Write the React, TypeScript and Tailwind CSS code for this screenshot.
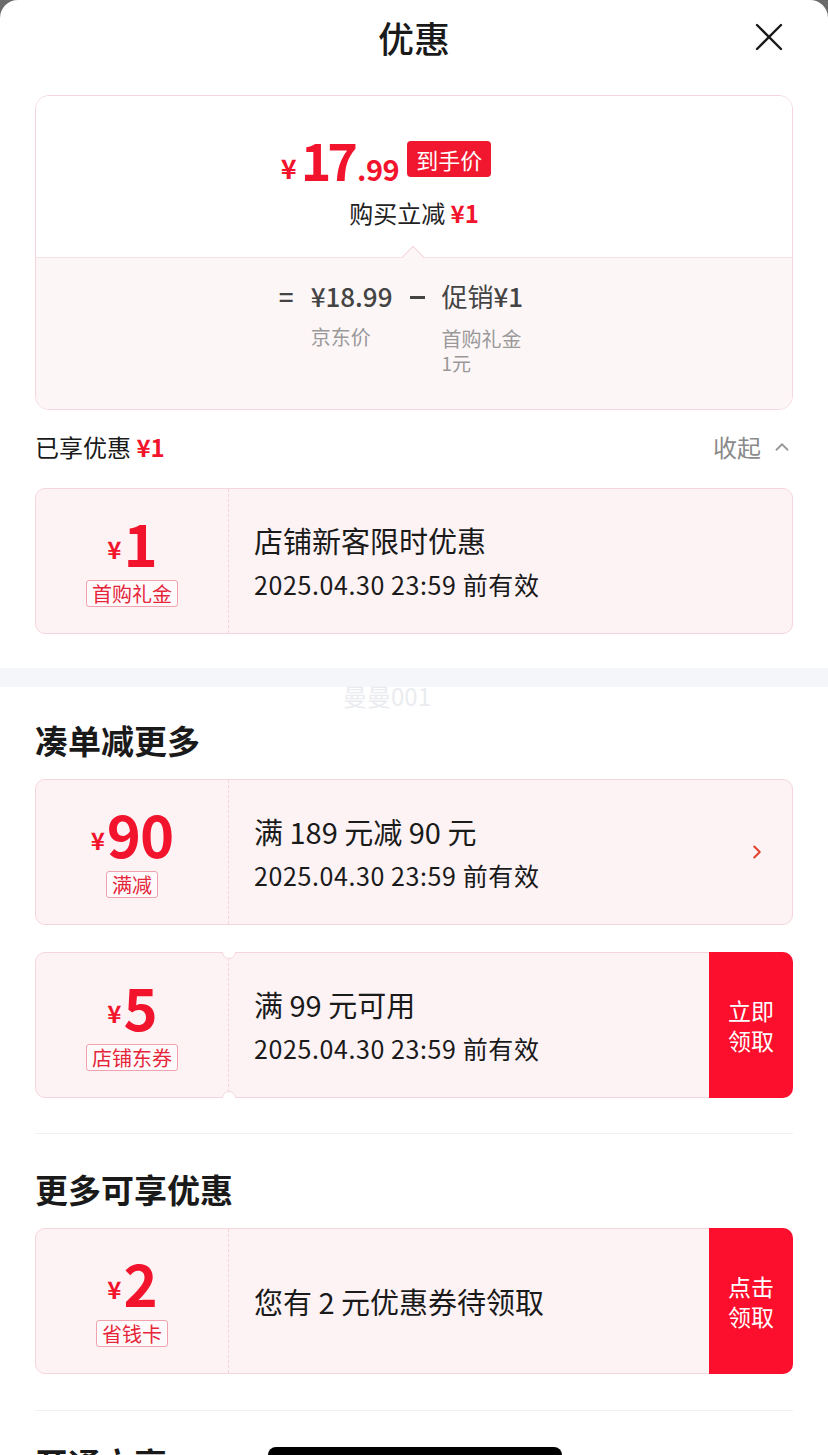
import type { ReactNode } from "react";
import { ChevronRight, ChevronUp } from "lucide-react";

const font = { fontFamily: '"Noto Sans CJK SC", "Noto Sans", sans-serif' };

type CouponProps = {
  amount: string;
  tag: string;
  title: string;
  date?: string;
  action?: "chevron" | ReactNode;
  notched?: boolean;
};

function Coupon({ amount, tag, title, date, action, notched = false }: CouponProps) {
  const isButton = action !== undefined && action !== "chevron";
  return (
    <div className="relative mx-[35px] flex h-[146px] rounded-[10px] border border-[#f6d6dd] bg-[#fdf3f5]">
      {/* 左侧金额 */}
      <div className="flex w-[193px] shrink-0 flex-col items-center justify-center border-r border-dashed border-[#f4d3da]">
        <div className="flex h-[56px] items-end leading-none text-[#f2142c]">
          <span className="mb-[10px] mr-[2px] text-[24px] font-bold">¥</span>
          <span className="text-[58px] font-bold tracking-[-1px]">{amount}</span>
        </div>
        <span className="mt-[9px] rounded-[3px] border border-[#f0a3af] bg-white/60 px-[5px] text-[20px] leading-[25px] text-[#e5253a]">
          {tag}
        </span>
      </div>
      {/* 右侧说明 */}
      <div className="flex min-w-0 flex-1 flex-col justify-center pl-[25px]">
        <p className="text-[29px] leading-[36px] text-[#1a1a1a]">{title}</p>
        {date ? (
          <p className="mt-[10px] text-[25px] leading-[32px] tracking-[0.6px] text-[#1a1a1a]">{date}</p>
        ) : null}
      </div>
      {action === "chevron" ? (
        <div className="flex items-center pr-[24px]">
          <ChevronRight size={22} strokeWidth={2.2} className="text-[#e0402f]" />
        </div>
      ) : null}
      {isButton ? (
        <div className="-my-px -mr-px flex w-[84px] shrink-0 items-center justify-center rounded-r-[10px] bg-[#fb0f2c] text-center text-[23px] leading-[30px] text-white">
          {action}
        </div>
      ) : null}
      {notched ? (
        <>
          <span className="absolute left-[186px] top-[-1px] h-[8px] w-[14px] overflow-hidden">
            <span className="absolute left-0 top-[-7px] h-[14px] w-[14px] rounded-full border border-[#f6d6dd] bg-white" />
          </span>
          <span className="absolute bottom-[-1px] left-[186px] h-[8px] w-[14px] overflow-hidden">
            <span className="absolute bottom-[-7px] left-0 h-[14px] w-[14px] rounded-full border border-[#f6d6dd] bg-white" />
          </span>
        </>
      ) : null}
    </div>
  );
}

function SectionTitle({ children, className = "" }: { children: ReactNode; className?: string }) {
  return (
    <h3 className={`px-[35px] text-[33px] font-bold leading-[44px] text-[#1a1a1a] ${className}`}>
      {children}
    </h3>
  );
}

export default function App() {
  return (
    <div style={font} className="relative h-[1455px] w-[828px] overflow-hidden bg-[#6b6b6b]">
      <div className="h-full rounded-t-[18px] bg-white">
        {/* 标题栏 */}
        <header className="relative flex h-[74px] items-center justify-center">
          <h2 className="text-[36px] font-medium leading-none text-[#1a1a1a]">优惠</h2>
          <svg
            viewBox="0 0 28 28"
            className="absolute right-[45px] top-[23px] h-[28px] w-[28px]"
            fill="none"
            aria-hidden="true"
          >
            <path d="M2 2L26 26M26 2L2 26" stroke="#1a1a1a" strokeWidth="2.4" strokeLinecap="round" />
          </svg>
        </header>

        {/* 到手价卡片 */}
        <div className="mx-[35px] mt-[21px] overflow-hidden rounded-[14px] border border-[#f6d6dd]">
          <div className="h-[161px] bg-white pt-[39px]">
            <div className="flex h-[48px] -translate-x-[28px] items-center justify-center">
              <div className="flex items-end leading-none text-[#f2142c]">
                <span className="mb-[4px] mr-[4px] text-[27px] font-bold">¥</span>
                <span className="text-[52px] font-bold tracking-[-4px]">17</span>
                <span className="mb-[2px] ml-[3px] text-[29px] font-bold tracking-[-0.5px]">.99</span>
              </div>
              <span className="ml-[8px] rounded-[4px] bg-[#f0172f] px-[9px] text-[22px] leading-[36px] text-white">
                到手价
              </span>
            </div>
            <p className="mt-[14px] text-center text-[24px] leading-[32px] text-[#222]">
              购买立减 <span className="font-bold text-[#f2142c]">¥1</span>
            </p>
          </div>
          <div className="relative h-[152px] border-t border-[#f8e0e5] bg-[#fdf6f7] pt-[21px]">
            <span className="absolute left-[369px] top-[-9px] h-[16px] w-[16px] rotate-45 border-l border-t border-[#f6d6dd] bg-[#fdf6f7]" />
            <div className="flex -translate-x-[13px] justify-center gap-[17px] text-[26px] leading-[34px] text-[#444]">
              <span className="font-medium">=</span>
              <div className="flex flex-col">
                <span className="font-medium">¥18.99</span>
                <span className="mt-[12px] text-[20px] leading-[24px] text-[#999]">京东价</span>
              </div>
              <span className="mt-[17px] h-[3px] w-[15px] bg-[#444]" />
              <div className="flex flex-col">
                <span>
                  促销<span className="font-medium">¥1</span>
                </span>
                <span className="mt-[14px] text-[20px] leading-[24px] text-[#999]">首购礼金</span>
                <span className="text-[19px] leading-[24px] text-[#999]">1元</span>
              </div>
            </div>
          </div>
        </div>

        {/* 已享优惠 */}
        <div className="mt-[21px] flex h-[32px] items-center justify-between px-[35px]">
          <p className="text-[24px] text-[#1a1a1a]">
            已享优惠 <span className="font-bold text-[#f2142c]">¥1</span>
          </p>
          <div className="flex items-center gap-[10px] text-[24px] text-[#8a8a8a]">
            <span>收起</span>
            <ChevronUp size={22} strokeWidth={2} className="text-[#999]" />
          </div>
        </div>
        <div className="mt-[25px]">
          <Coupon amount="1" tag="首购礼金" title="店铺新客限时优惠" date="2025.04.30 23:59 前有效" />
        </div>

        <div className="relative mt-[34px] h-[19px] bg-[#f5f6f9]">
          <span className="absolute left-[343px] top-[13px] text-[24px] leading-[30px] text-[#eaecf0]">
            曼曼001
          </span>
        </div>

        <SectionTitle className="mt-[31px]">凑单减更多</SectionTitle>
        <div className="mt-[17px]">
          <Coupon amount="90" tag="满减" title="满 189 元减 90 元" date="2025.04.30 23:59 前有效" action="chevron" />
        </div>
        <div className="mt-[27px]">
          <Coupon
            amount="5"
            tag="店铺东券"
            title="满 99 元可用"
            date="2025.04.30 23:59 前有效"
            notched
            action={
              <>
                立即
                <br />
                领取
              </>
            }
          />
        </div>

        <div className="mx-[35px] mt-[35px] border-t border-[#f0f0f0]" />

        <SectionTitle className="mt-[33px]">更多可享优惠</SectionTitle>
        <div className="mt-[17px]">
          <Coupon
            amount="2"
            tag="省钱卡"
            title="您有 2 元优惠券待领取"
            action={
              <>
                点击
                <br />
                领取
              </>
            }
          />
        </div>

        <div className="mx-[35px] mt-[36px] border-t border-[#f0f0f0]" />
        <SectionTitle className="mt-[30px]">开通立享</SectionTitle>
      </div>

      {/* 系统 Home 指示条 */}
      <span className="absolute bottom-[-8px] left-[268px] h-[16px] w-[294px] rounded-full bg-black" />
    </div>
  );
}
